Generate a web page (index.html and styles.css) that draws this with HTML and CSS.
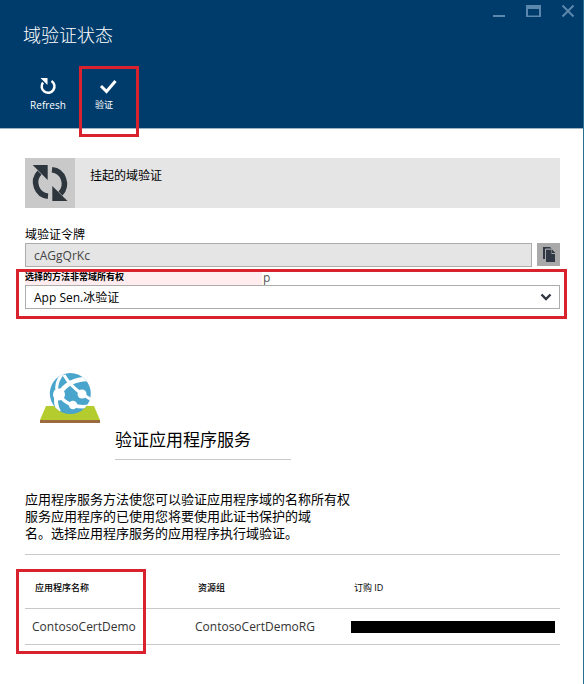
FILE: index.html
```html
<!DOCTYPE html>
<html lang="zh-CN">
<head>
<meta charset="utf-8">
<meta name="viewport" content="width=device-width, initial-scale=1">
<title>域验证状态</title>
<link rel="stylesheet" href="styles.css">
</head>
<body>
<div class="blade">
  <header class="blade-header">
    <div class="title-row">
      <h1 class="blade-title">域验证状态</h1>
      <div class="window-controls">
        <button class="window-button" type="button" aria-label="最小化">
          <svg width="16" height="16" viewBox="0 0 16 16"><path d="M1 13h12" stroke="currentColor" stroke-width="2"/></svg>
        </button>
        <button class="window-button" type="button" aria-label="最大化">
          <svg width="16" height="16" viewBox="0 0 16 16"><path d="M0 2h15v12H0z M2 6v6.500h11V6z" fill="currentColor" fill-rule="evenodd"/></svg>
        </button>
        <button class="window-button" type="button" aria-label="关闭">
          <svg width="16" height="16" viewBox="0 0 16 16"><path d="M2.500 2.500l11 11M13.500 2.500l-11 11" stroke="currentColor" stroke-width="2"/></svg>
        </button>
      </div>
    </div>
    <div class="commands">
      <button class="command" type="button">
        <svg width="18" height="18" viewBox="0 0 18 18"><path d="M12.500 4A6.400 6.400 0 1 1 4 5.500" fill="none" stroke="currentColor" stroke-width="2.500"/><path d="M1.500 1H8.500V8z" fill="currentColor"/></svg>
        <span>Refresh</span>
      </button>
      <button class="command command-verify" type="button">
        <svg width="18" height="18" viewBox="0 0 18 18"><path d="M2 9l5.500 5.500L16.500 4" fill="none" stroke="currentColor" stroke-width="3"/></svg>
        <span>验证</span>
      </button>
    </div>
    <div class="callout callout-verify"></div>
  </header>

  <main class="content">
    <div class="status">
      <div class="status-icon">
        <svg width="50" height="50" viewBox="0 0 50 50" fill="#2d353d">
          <path d="M23 38.200A13.600 14 0 0 1 14.500 14.500M27 11.800A13.600 14 0 0 1 35.500 35.500" fill="none" stroke="#2d353d" stroke-width="5.500"/>
          <path d="M7.700 7H22.700V22z"/>
          <path d="M42.500 43H27.300V28z"/>
        </svg>
      </div>
      <p class="status-text">挂起的域验证</p>
    </div>

    <label class="token-label" for="token">域验证令牌</label>
    <div class="token-row">
      <input class="field token" id="token" type="text" value="cAGgQrKc" readonly>
      <button class="copy" type="button" aria-label="复制">
        <svg width="23" height="23" viewBox="0 0 23 23" fill="#2f3844">
          <path d="M6 4h7l2 2H9v10H6z"/>
          <path d="M9 6.500h5.500V11H18v8H9z"/>
          <path d="M15 6.500L18.500 10H15z"/>
          <path d="M8.500 16V6H15" fill="none" stroke="#a9a9a9"/>
        </svg>
      </button>
    </div>

    <div class="method">
      <div class="method-caption">
        <label class="method-label" for="method">选择的方法非常域所有权</label>
        <span class="method-tail">p</span>
      </div>
      <div class="select-wrap">
        <select class="field method-select" id="method"><option>App Sen.冰验证</option></select>
        <svg class="chevron" width="12" height="8" viewBox="0 0 12 8"><path d="M1.500 1.500L6 6l4.500-4.500" fill="none" stroke="#2f3640" stroke-width="2.400"/></svg>
      </div>
      <div class="callout callout-method"></div>
    </div>

    <section class="service">
      <div class="service-head">
        <svg class="service-logo" width="60" height="52" viewBox="0 0 60 52">
          <path d="M6 34h48l6 14H0z" fill="#b5cc2e"/>
          <path d="M0 48h60v3H0z" fill="#9c6a3f"/>
          <clipPath id="globe"><circle cx="30.300" cy="21.500" r="20.500"/></clipPath>
          <circle cx="30.300" cy="21.500" r="20.500" fill="#4aa5cc"/>
          <g clip-path="url(#globe)" fill="none" stroke="#fff">
            <path d="M19 22C26 11 36 6 51 7" stroke-width="4.500"/>
            <path d="M18 22C15 15 17 8 24 0" stroke-width="3"/>
            <path d="M24 3C29 12 35 17 42 22L52 28" stroke-width="3"/>
            <path d="M19 22C22 28 26 31 33 33C39 35 45 36 50 33" stroke-width="3.500"/>
            <path d="M17 22C15 28 16 34 19 40" stroke-width="4"/>
            <g fill="#fff" stroke="none"><circle cx="19" cy="22.500" r="6"/><circle cx="42" cy="22" r="4.500"/><circle cx="33" cy="33" r="4.200"/></g>
          </g>
        </svg>
        <h2 class="service-title">验证应用程序服务</h2>
      </div>
      <p class="service-text">应用程序服务方法使您可以验证应用程序域的名称所有权<br>服务应用程序的已使用您将要使用此证书保护的域<br>名。选择应用程序服务的应用程序执行域验证。</p>
    </section>

    <div class="apps">
      <table class="apps-table">
        <colgroup><col class="col-name"><col class="col-group"><col></colgroup>
        <thead>
          <tr><th scope="col">应用程序名称</th><th scope="col">资源组</th><th class="light" scope="col">订购 ID</th></tr>
        </thead>
        <tbody>
          <tr><td>ContosoCertDemo</td><td>ContosoCertDemoRG</td><td><div class="redacted"></div></td></tr>
        </tbody>
      </table>
      <div class="callout callout-apps"></div>
    </div>
  </main>
</div>
</body>
</html>
```
FILE: styles.css
```css
* { box-sizing: border-box; }

body {
  margin: 0;
  background: #fff;
  color: #000;
  font-family: "Open Sans", "Noto Sans CJK SC", sans-serif;
  font-size: 12px;
}

h1, h2, p { margin: 0; font-weight: 400; }

button {
  border: 0;
  padding: 0;
  background: none;
  color: inherit;
  font: inherit;
  cursor: pointer;
}

svg { display: block; }

.blade {
  min-height: 100vh;
  border-right: 1px solid #27708f;
}

.blade-header {
  position: relative;
  height: 129px;
  border-bottom: 1px solid #9fb3c5;
  background: #003c6b;
  color: #fff;
}

.title-row {
  display: flex;
  justify-content: space-between;
  padding: 3px 7px 0 23px;
}

.blade-title {
  margin-top: 19px;
  font-size: 18px;
  font-weight: 300;
  line-height: 26px;
}

.window-controls {
  display: flex;
  gap: 18px;
  height: 16px;
  color: #5d88ae;
}

.commands {
  display: flex;
  margin-top: 29px;
  padding-left: 20px;
}

.command {
  display: flex;
  flex-direction: column;
  align-items: center;
  gap: 3px;
  width: 56px;
  font-size: 10px;
  line-height: 14px;
}

.command-verify { font-size: 9px; }
.command-verify svg { margin-left: 8px; }

.callout {
  position: absolute;
  border: 3px solid #d8232f;
  pointer-events: none;
}

.callout-verify { top: 66px; left: 79px; width: 60px; height: 71px; }
.callout-method { inset: 0 -7px -10px -9px; }
.callout-apps { top: 15px; left: -9px; width: 130px; height: 85px; }

.content { padding: 29px 23px 24px 25px; }

.status {
  display: flex;
  background: #e5e5e5;
}

.status-icon { background: #c9c9c9; }

.status-text {
  padding: 9px 15px;
  line-height: 18px;
}

.token-label {
  display: block;
  margin-top: 18px;
  line-height: 17px;
}

.token-row { display: flex; gap: 5px; }

.field {
  width: 100%;
  height: 24px;
  margin: 0;
  padding: 0 8px;
  border: 1px solid #acacac;
  border-radius: 0;
  color: #000;
  font: inherit;
}

.token { background: #e5e5e5; color: #444; }

.copy {
  flex: none;
  width: 23px;
  height: 23px;
  background: #a9a9a9;
}

.method {
  position: relative;
  margin-top: 2px;
}

.method-caption {
  display: flex;
  align-items: flex-end;
  height: 16px;
}

.method-label {
  width: 237px;
  height: 13px;
  background: #ffecef;
  font-size: 9px;
  font-weight: 700;
  line-height: 9px;
}

.method-tail {
  margin-left: 1px;
  color: #555;
  line-height: 14px;
}

.select-wrap { position: relative; }

.method-select {
  display: block;
  appearance: none;
  background: #fff;
}

.chevron {
  position: absolute;
  top: 8px;
  right: 8px;
  pointer-events: none;
}

.service { margin-top: 63px; }

.service-head {
  display: flex;
  align-items: flex-start;
  gap: 15px;
  padding-left: 15px;
}

.service-title {
  width: 176px;
  margin-top: 55px;
  padding-bottom: 7px;
  border-bottom: 1px solid #c8c8c8;
  font-size: 17px;
  line-height: 25px;
}

.service-text {
  margin-top: 31px;
  font-size: 13px;
  line-height: 17px;
}

.apps {
  position: relative;
  margin-top: 12px;
}

.apps-table {
  width: 100%;
  border-collapse: separate;
  border-spacing: 0;
  border-top: 1px solid #c8c8c8;
  table-layout: fixed;
}

.col-name { width: 163px; }
.col-group { width: 156px; }

.apps-table th,
.apps-table td {
  border-bottom: 1px solid #c8c8c8;
  text-align: left;
}

.apps-table th {
  height: 54px;
  padding: 12px 10px 0;
  font-size: 9px;
  font-weight: 500;
}

.apps-table .light { font-weight: 400; }

.apps-table td {
  height: 36px;
  padding: 0 5px 0 7px;
  color: #333;
}

.redacted { height: 12px; background: #000; }
```
